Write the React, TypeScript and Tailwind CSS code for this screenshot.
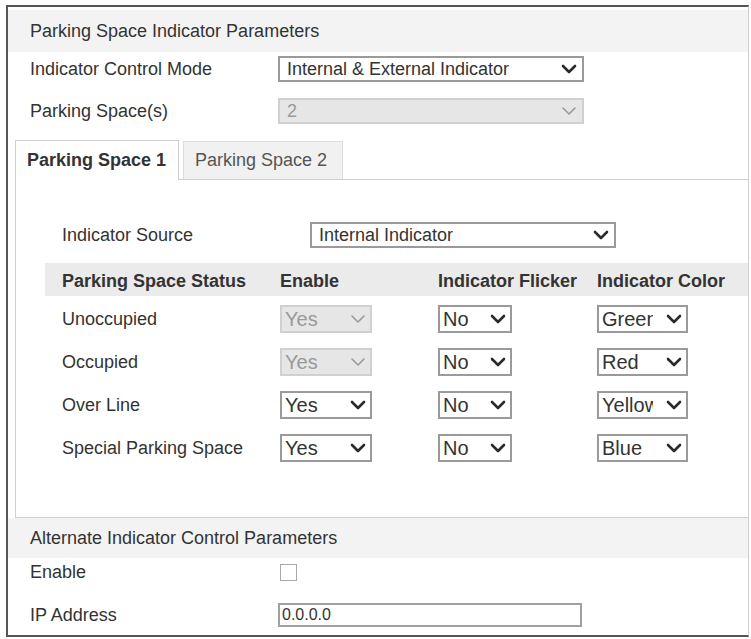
import React from "react";

type Opt = {
  w: string;
  h?: string;
  text: string;
  disabled?: boolean;
  big?: boolean;
  clip?: string;
};

function Chevron({ disabled }: { disabled?: boolean }) {
  return (
    <svg width="16" height="10" viewBox="0 0 16 10" className="shrink-0">
      <polyline
        points="2,2 8,8 14,2"
        fill="none"
        stroke={disabled ? "#9a9a9a" : "#2a2a2a"}
        strokeWidth={disabled ? 1.6 : 2.6}
        strokeLinecap="round"
        strokeLinejoin="round"
      />
    </svg>
  );
}

function Select({ w, h = "h-[28px]", text, disabled, big, clip }: Opt) {
  return (
    <div
      className={`${w} ${h} flex items-center border-2 ${
        disabled ? "border-[#d0d0d0] bg-[#e6e6e6] text-[#9a9a9a]" : "border-[#9a9a9a] bg-white text-[#333]"
      } ${big ? "pl-[7px] pr-[5px] text-[18px]" : "pl-[3px] pr-[4px] text-[20px]"}`}
    >
      <div
        className={`${clip ?? "flex-1 min-w-0"} shrink-0 overflow-hidden whitespace-nowrap leading-none`}
      >
        {text}
      </div>
      {clip ? <div className="flex-1" /> : null}
      <Chevron disabled={disabled} />
    </div>
  );
}

const rows = [
  { label: "Unoccupied", enable: "Yes", enDis: true, color: "Green" },
  { label: "Occupied", enable: "Yes", enDis: true, color: "Red" },
  { label: "Over Line", enable: "Yes", enDis: false, color: "Yellow" },
  { label: "Special Parking Space", enable: "Yes", enDis: false, color: "Blue" },
];

export default function App() {
  return (
    <div
      className="w-[751px] h-[639px] bg-white pt-[5px] pl-[6px] text-[18px] text-[#333]"
      style={{ fontFamily: "'Liberation Sans', Arial, sans-serif" }}
    >
      <div className="w-[743px] h-[632px] border-l-2 border-t-2 border-b-2 border-[#555] border-r border-r-[#cfcfcf] flex flex-col">
        {/* Parking space indicator parameters */}
        <div className="mt-[3px] h-[42px] bg-[#f3f3f3] flex items-center pl-[22px]">
          Parking Space Indicator Parameters
        </div>

        <div className="mt-[4px] h-[26px] flex items-center pl-[22px]">
          <div className="w-[248px]">Indicator Control Mode</div>
          <Select w="w-[306px]" h="h-[26px]" text="Internal & External Indicator" big />
        </div>

        <div className="mt-[16px] h-[26px] flex items-center pl-[22px]">
          <div className="w-[248px]">Parking Space(s)</div>
          <Select w="w-[306px]" h="h-[26px]" text="2" big disabled />
        </div>

        {/* Tabs */}
        <div className="mt-[16px] ml-[7px] flex h-[40px]">
          <div className="w-[164px] h-[40px] border-l border-t border-r border-[#cfcfcf] bg-white flex items-center pl-[11px] font-bold text-[#333]">
            Parking Space 1
          </div>
          <div className="flex-1 border-b border-[#cfcfcf] flex items-end">
            <div className="ml-[4px] w-[160px] h-[38px] border-l border-t border-r border-[#dcdcdc] bg-[#f1f1f1] flex items-center pl-[11px] text-[#555]">
              Parking Space 2
            </div>
          </div>
        </div>

        {/* Tab panel */}
        <div className="ml-[7px] border-l border-b border-[#cfcfcf] pb-[55px]">
          <div className="mt-[42px] h-[26px] flex items-center pl-[46px]">
            <div className="w-[248px]">Indicator Source</div>
            <Select w="w-[306px]" h="h-[26px]" text="Internal Indicator" big />
          </div>

          <div className="mt-[15px] ml-[29px] h-[33px] bg-[#ebebeb] flex items-center pl-[17px] pt-[4px] font-bold">
            <div className="w-[218px]">Parking Space Status</div>
            <div className="w-[158px]">Enable</div>
            <div className="w-[159px]">Indicator Flicker</div>
            <div>Indicator Color</div>
          </div>

          <div className="mt-[9px] flex flex-col gap-[15px] pl-[46px]">
            {rows.map((r) => (
              <div key={r.label} className="h-[28px] flex items-center">
                <div className="w-[218px]">{r.label}</div>
                <div className="w-[158px]">
                  <Select w="w-[92px]" text={r.enable} disabled={r.enDis} />
                </div>
                <div className="w-[159px]">
                  <Select w="w-[74px]" text="No" />
                </div>
                <Select w="w-[91px]" text={r.color} clip="w-[51px]" />
              </div>
            ))}
          </div>
        </div>

        {/* Alternate indicator control parameters */}
        <div className="h-[40px] bg-[#f3f3f3] flex items-center pl-[22px]">
          Alternate Indicator Control Parameters
        </div>

        <div className="mt-[2px] h-[24px] flex items-center pl-[22px]">
          <div className="w-[250px]">Enable</div>
          <div className="w-[17px] h-[17px] border border-[#a8a8a8] bg-white" />
        </div>

        <div className="mt-[19px] h-[24px] flex items-center pl-[22px]">
          <div className="w-[248px]">IP Address</div>
          <div className="w-[304px] h-[24px] border-2 border-[#a0a0a0] bg-white flex items-center pl-[2px] text-[16px] leading-none">
            0.0.0.0
          </div>
        </div>
      </div>
    </div>
  );
}
